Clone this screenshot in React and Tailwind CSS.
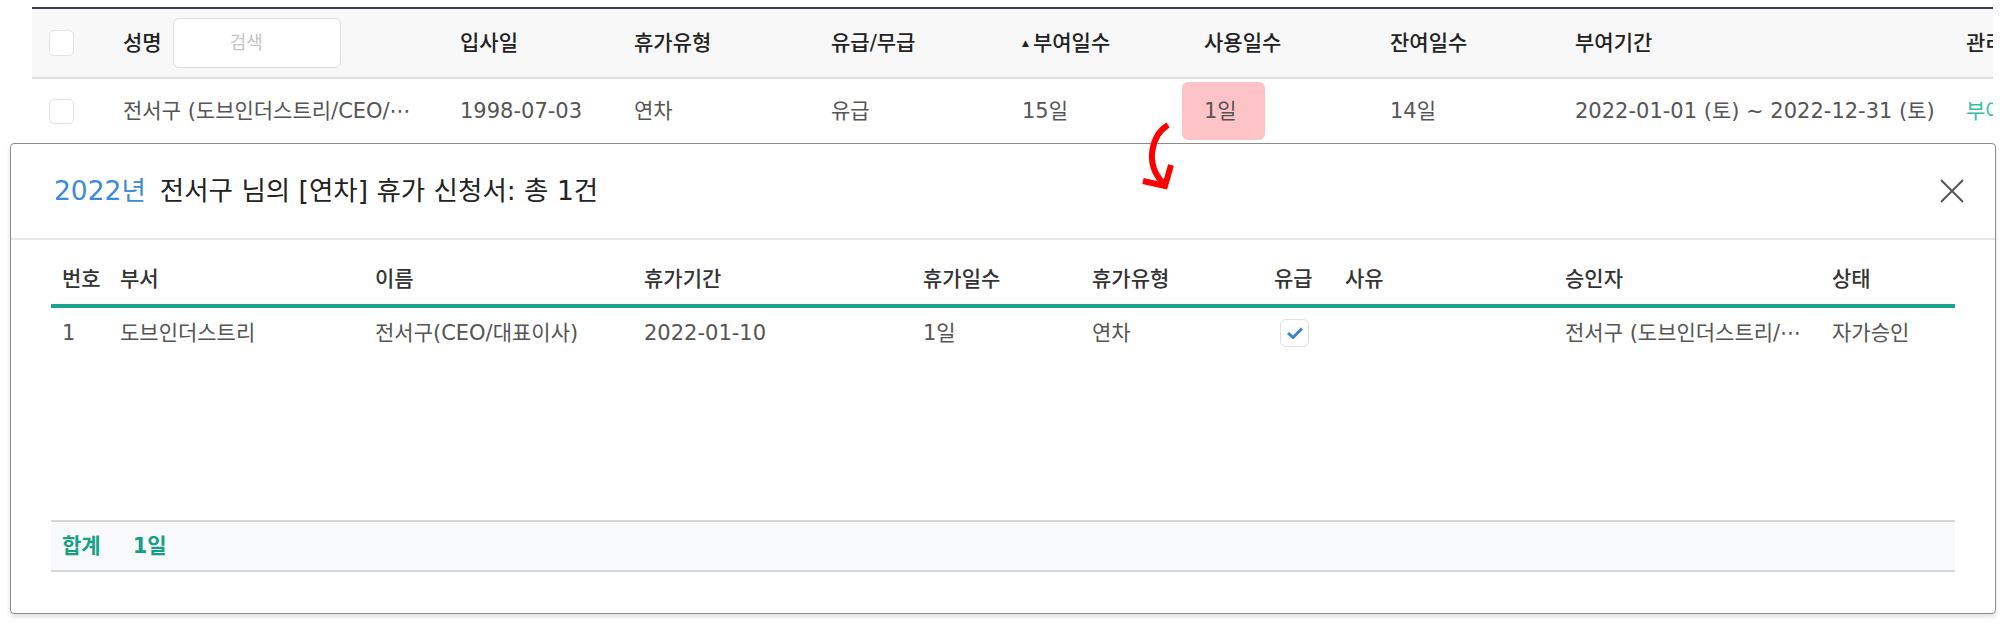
import React from 'react';

const topCols = [
  { w: 'w-[174px]', head: '입사일', cell: '1998-07-03' },
  { w: 'w-[197px]', head: '휴가유형', cell: '연차' },
  { w: 'w-[191px]', head: '유급/무급', cell: '유급' },
];

const modalHead = ['번호', '부서', '이름', '휴가기간', '휴가일수', '휴가유형', '유급', '사유', '승인자', '상태'];

function Box({ className = '' }) {
  return <span className={`block rounded-[5px] border border-[#e2e2e2] bg-white ${className}`} />;
}

export default function App() {
  return (
    <div className="relative h-[629px] w-[2000px] overflow-hidden bg-white font-['DejaVu_Sans','Noto_Sans_CJK_KR',sans-serif] text-[21px] leading-none">
      {/* list table behind the popup */}
      <div className="pl-[32px] pt-[7px]">
        <div className="w-[1961px] overflow-hidden whitespace-nowrap">
          <div className="flex h-[72px] items-center border-y-2 border-t-[#3b3f4c] border-b-[#dedede] bg-[#f8f8f8] font-medium text-[#222]">
            <div className="w-[91px] shrink-0 pl-[17px]"><Box className="h-[26px] w-[25px]" /></div>
            <div className="flex w-[337px] shrink-0 items-center gap-[11px]">
              <span>성명</span>
              <div className="flex h-[50px] w-[168px] items-center rounded-[6px] border border-[#dcdcdc] bg-white pl-[56px] text-[18px] font-normal text-[#c4c4c4]">검색</div>
            </div>
            {topCols.map(c => (
              <div key={c.head} className={`${c.w} shrink-0`}>{c.head}</div>
            ))}
            <div className="flex w-[160px] shrink-0 items-center">
              <span className="mr-[4px] text-[9px]">▲</span>부여일수
            </div>
            <div className="w-[208px] shrink-0 pl-[22px]">사용일수</div>
            <div className="w-[185px] shrink-0">잔여일수</div>
            <div className="w-[391px] shrink-0">부여기간</div>
            <div className="w-[100px] shrink-0">관리</div>
          </div>

          <div className="flex h-[64px] items-center text-[#555]">
            <div className="w-[91px] shrink-0 pl-[17px]"><Box className="h-[25px] w-[25px]" /></div>
            <div className="w-[337px] shrink-0">전서구 (도브인더스트리/CEO/⋯</div>
            {topCols.map(c => (
              <div key={c.head} className={`${c.w} shrink-0`}>{c.cell}</div>
            ))}
            <div className="w-[160px] shrink-0">15일</div>
            <div className="w-[208px] shrink-0">
              <div className="flex h-[58px] w-[83px] items-center rounded-[6px] bg-[#fdc3c6] pl-[22px]">1일</div>
            </div>
            <div className="w-[185px] shrink-0">14일</div>
            <div className="w-[391px] shrink-0">2022-01-01 (토) ~ 2022-12-31 (토)</div>
            <div className="w-[100px] shrink-0 text-[#34bda6]">부여</div>
          </div>
        </div>
      </div>

      {/* popup */}
      <div className="absolute left-[10px] top-[143px] flex h-[471px] w-[1986px] flex-col rounded-[4px] border border-[#8c8c8c] bg-white shadow-[0_3px_5px_rgba(0,0,0,0.12)]">
        <div className="flex h-[96px] shrink-0 items-center justify-between border-b-2 border-[#e8e8e8] pl-[43px] pr-[31px]">
          <h2 className="text-[26.5px] text-[#222]">
            <span className="mr-[14px] text-[#3d8ad6]">2022년</span>전서구 님의 [연차] 휴가 신청서: 총 1건
          </h2>
          <svg width="24" height="24" viewBox="0 0 24 24" className="text-[#555]">
            <path d="M1 1L23 23M23 1L1 23" stroke="currentColor" strokeWidth="2" fill="none" />
          </svg>
        </div>

        <div className="flex flex-1 flex-col px-[40px] pb-[41px] pt-[15px]">
          <div className="grid h-[53px] grid-cols-[58px_255px_269px_279px_169px_182px_71px_220px_267px_1fr] items-center border-b-4 border-[#1aa38f] font-medium text-[#333]">
            {modalHead.map(h => (
              <div key={h} className="pl-[11px]">{h}</div>
            ))}
          </div>
          <div className="grid h-[50px] grid-cols-[58px_255px_269px_279px_169px_182px_71px_220px_267px_1fr] items-center whitespace-nowrap text-[#555]">
            <div className="pl-[11px]">1</div>
            <div className="pl-[11px]">도브인더스트리</div>
            <div className="pl-[11px]">전서구(CEO/대표이사)</div>
            <div className="pl-[11px]">2022-01-10</div>
            <div className="pl-[11px]">1일</div>
            <div className="pl-[11px]">연차</div>
            <div className="pl-[17px]">
              <span className="flex h-[28px] w-[29px] items-center justify-center rounded-[6px] border border-[#e0e0e0] bg-white">
                <svg width="16" height="12" viewBox="0 0 16 12">
                  <path d="M1 6L6 10.5L15 1.5" stroke="#3a7fd8" strokeWidth="3" fill="none" strokeLinejoin="round" />
                </svg>
              </span>
            </div>
            <div className="pl-[11px]"></div>
            <div className="pl-[11px]">전서구 (도브인더스트리/⋯</div>
            <div className="pl-[11px]">자가승인</div>
          </div>

          <div className="mt-auto flex h-[52px] items-center border-y-2 border-[#d6d6d6] bg-[#f7f9fa] pl-[11px] font-semibold text-[#15a085]">
            <span>합계</span>
            <span className="ml-[32px]">1일</span>
          </div>
        </div>
      </div>

      {/* red annotation arrow */}
      <svg className="absolute left-[1130px] top-[115px]" width="55" height="80" viewBox="0 0 55 80">
        <path d="M38 10C22 20 14 48 33 68" stroke="#ff0000" strokeWidth="6" fill="none" />
        <path d="M13 66L35 71L41 50" stroke="#ff0000" strokeWidth="6" fill="none" />
      </svg>
    </div>
  );
}
